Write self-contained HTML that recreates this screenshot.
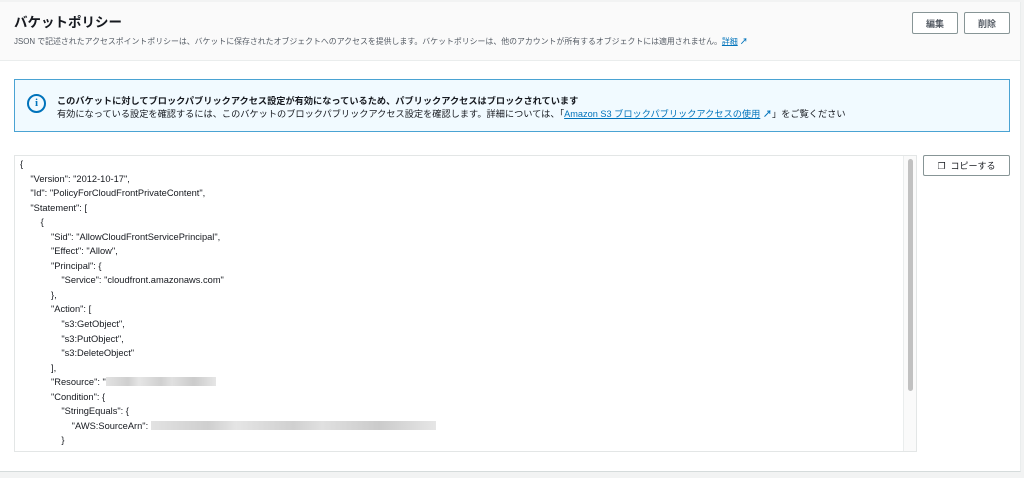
<!DOCTYPE html>
<html><head><meta charset="utf-8"><style>
*{box-sizing:border-box;margin:0;padding:0}
body{width:1024px;height:478px;background:#f2f3f3;font-family:"Liberation Sans","Noto Sans CJK JP",sans-serif;color:#16191f;position:relative;overflow:hidden}
.panel{position:absolute;left:0;top:2px;width:1021px;height:470px;background:#fff;border-bottom:1px solid #d5dbdb;border-right:1px solid #eaeded}
.head{position:absolute;left:0;top:0;width:100%;height:59px;background:#fafafa;border-bottom:1px solid #eaeded}
h1{position:absolute;left:14px;top:9px;font-size:13.5px;font-weight:bold;color:#16191f}
.desc{position:absolute;left:14px;top:34px;font-size:7.9px;color:#545b64;white-space:nowrap}
a{color:#0073bb;text-decoration:underline}
.btn{position:absolute;height:22px;border:1px solid #879596;border-radius:2px;background:#fff;font-size:9px;font-weight:bold;color:#545b64;display:flex;align-items:center;justify-content:center}
.info{position:absolute;left:14px;top:77px;width:996px;height:53px;background:#f1faff;border:1px solid #4aa3d3}
.info .t1{position:absolute;left:42px;top:13px;font-size:9.2px;font-weight:bold;white-space:nowrap}
.info .t2{position:absolute;left:42px;top:26px;font-size:9.2px;color:#16191f;white-space:nowrap}
.ic{position:absolute;left:12px;top:14px;width:19px;height:19px;border:2.5px solid #0073bb;border-radius:50%;color:#0073bb;font-weight:bold;font-size:11px;text-align:center;line-height:14px;font-family:"Liberation Serif",serif}
.code{position:absolute;left:14px;top:153px;width:903px;height:297px;border:1px solid #e3e6e6;background:#fff}
.code pre{position:absolute;left:5px;top:1px;font-family:"Liberation Sans",sans-serif;font-size:9.3px;line-height:14.55px;color:#16191f}
.sb{position:absolute;right:0;top:0;width:13px;height:100%;border-left:1px solid #eaeded;background:#fafafa}
.th{position:absolute;left:4px;top:3px;width:5px;height:232px;background:#c1c1c1;border-radius:3px}
.blur{display:inline-block;height:9px;vertical-align:-1px;background:linear-gradient(90deg,#e2e2e2,#cfcfcf 20%,#e5e5e5 30%,#d0d0d0 50%,#e0e0e0 60%,#cbcbcb 80%,#e6e6e6)}
</style></head><body>
<div class="panel">
<div class="head">
<h1>バケットポリシー</h1>
<div class="desc">JSON で記述されたアクセスポイントポリシーは、バケットに保存されたオブジェクトへのアクセスを提供します。バケットポリシーは、他のアカウントが所有するオブジェクトには適用されません。<a>詳細</a> <span style="color:#0073bb;font-weight:bold">&#x2197;</span></div>
<div class="btn" style="left:912px;top:10px;width:46px">編集</div>
<div class="btn" style="left:964px;top:10px;width:46px">削除</div>
</div>
<div class="info"><div class="ic">i</div>
<div class="t1">このバケットに対してブロックパブリックアクセス設定が有効になっているため、パブリックアクセスはブロックされています</div>
<div class="t2">有効になっている設定を確認するには、このバケットのブロックパブリックアクセス設定を確認します。詳細については、「<a>Amazon S3 ブロックパブリックアクセスの使用</a> <span style="color:#0073bb;font-weight:bold">&#x2197;</span>」をご覧ください</div>
</div>
<div class="code"><pre>{
    "Version": "2012-10-17",
    "Id": "PolicyForCloudFrontPrivateContent",
    "Statement": [
        {
            "Sid": "AllowCloudFrontServicePrincipal",
            "Effect": "Allow",
            "Principal": {
                "Service": "cloudfront.amazonaws.com"
            },
            "Action": [
                "s3:GetObject",
                "s3:PutObject",
                "s3:DeleteObject"
            ],
            "Resource": "<span class="blur" style="width:110px"></span>
            "Condition": {
                "StringEquals": {
                    "AWS:SourceArn": <span class="blur" style="width:285px"></span>
                }</pre>
<div class="sb"><div class="th"></div></div></div>
<div class="btn" style="left:923px;top:153px;width:87px;height:21px;font-weight:normal;color:#16191f">&#x2750;&nbsp; コピーする</div>
</div>
</body></html>
